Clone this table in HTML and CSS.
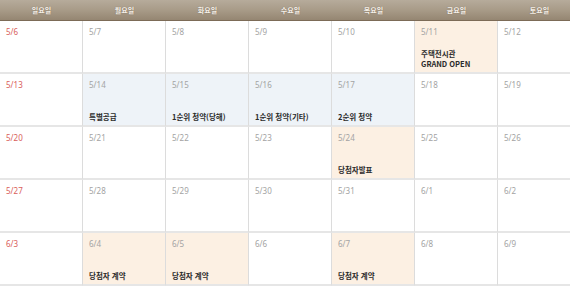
FILE: index.html
```html
<!DOCTYPE html>
<html lang="ko">
<head>
<meta charset="utf-8">
<link rel="stylesheet" href="styles.css">
</head>
<body>
<div class="cal">
  <div class="head">
    <div class="hd">일요일</div>
    <div class="hd">월요일</div>
    <div class="hd">화요일</div>
    <div class="hd">수요일</div>
    <div class="hd">목요일</div>
    <div class="hd">금요일</div>
    <div class="hd">토요일</div>
  </div>
  <div class="grid">
    <div class="cell sun"><span class="d">5/6</span></div>
    <div class="cell"><span class="d">5/7</span></div>
    <div class="cell"><span class="d">5/8</span></div>
    <div class="cell"><span class="d">5/9</span></div>
    <div class="cell"><span class="d">5/10</span></div>
    <div class="cell beige"><span class="d">5/11</span><span class="ev">주택전시관<br>GRAND OPEN</span></div>
    <div class="cell"><span class="d">5/12</span></div>

    <div class="cell sun"><span class="d">5/13</span></div>
    <div class="cell blue"><span class="d">5/14</span><span class="ev">특별공급</span></div>
    <div class="cell blue"><span class="d">5/15</span><span class="ev">1순위 청약(당해)</span></div>
    <div class="cell blue"><span class="d">5/16</span><span class="ev">1순위 청약(기타)</span></div>
    <div class="cell blue"><span class="d">5/17</span><span class="ev">2순위 청약</span></div>
    <div class="cell"><span class="d">5/18</span></div>
    <div class="cell"><span class="d">5/19</span></div>

    <div class="cell sun"><span class="d">5/20</span></div>
    <div class="cell"><span class="d">5/21</span></div>
    <div class="cell"><span class="d">5/22</span></div>
    <div class="cell"><span class="d">5/23</span></div>
    <div class="cell beige"><span class="d">5/24</span><span class="ev">당첨자발표</span></div>
    <div class="cell"><span class="d">5/25</span></div>
    <div class="cell"><span class="d">5/26</span></div>

    <div class="cell sun"><span class="d">5/27</span></div>
    <div class="cell"><span class="d">5/28</span></div>
    <div class="cell"><span class="d">5/29</span></div>
    <div class="cell"><span class="d">5/30</span></div>
    <div class="cell"><span class="d">5/31</span></div>
    <div class="cell"><span class="d">6/1</span></div>
    <div class="cell"><span class="d">6/2</span></div>

    <div class="cell sun"><span class="d">6/3</span></div>
    <div class="cell beige"><span class="d">6/4</span><span class="ev">당첨자 계약</span></div>
    <div class="cell beige"><span class="d">6/5</span><span class="ev">당첨자 계약</span></div>
    <div class="cell"><span class="d">6/6</span></div>
    <div class="cell beige"><span class="d">6/7</span><span class="ev">당첨자 계약</span></div>
    <div class="cell"><span class="d">6/8</span></div>
    <div class="cell"><span class="d">6/9</span></div>
  </div>
</div>
</body>
</html>
```
FILE: styles.css
```css
html, body {
  margin: 0;
  padding: 0;
  overflow: hidden;
  background: #ffffff;
}
.cal {
  width: 581px;
  font-family: "Noto Sans", "Noto Sans CJK KR", sans-serif;
}
.head {
  display: grid;
  grid-template-columns: repeat(7, 83px);
  height: 20px;
  background: linear-gradient(to bottom, #b6ab9b 0%, #a89b88 50%, #958672 100%);
  border-bottom: 1px solid #7c6b57;
}
.hd {
  display: flex;
  align-items: center;
  justify-content: center;
  color: #f6f1ea;
  font-family: "Noto Sans CJK KR", sans-serif;
  font-weight: 700;
  font-size: 7px;
  text-shadow: 0 0 1px rgba(80, 60, 40, 0.5);
}
.grid {
  display: grid;
  grid-template-columns: repeat(7, 83px);
  grid-auto-rows: 53px;
}
.cell {
  display: flex;
  flex-direction: column;
  justify-content: space-between;
  box-sizing: border-box;
  padding: 5px 6px 4px 6px;
  border-right: 1px solid #dcdcdc;
  border-bottom: 2px solid #e6e6e6;
  background: #ffffff;
}
.cell:nth-child(7n) {
  border-right: none;
}
.cell.beige {
  background: #fcf0e3;
}
.cell.blue {
  background: #eef3f8;
}
.d {
  font-size: 8px;
  line-height: 11px;
  color: #a3a3a3;
}
.sun .d {
  color: #d9605b;
}
.ev {
  font-family: "Noto Sans CJK KR", sans-serif;
  font-weight: 700;
  font-size: 7.5px;
  line-height: 9.5px;
  color: #2b2b2b;
}
```
